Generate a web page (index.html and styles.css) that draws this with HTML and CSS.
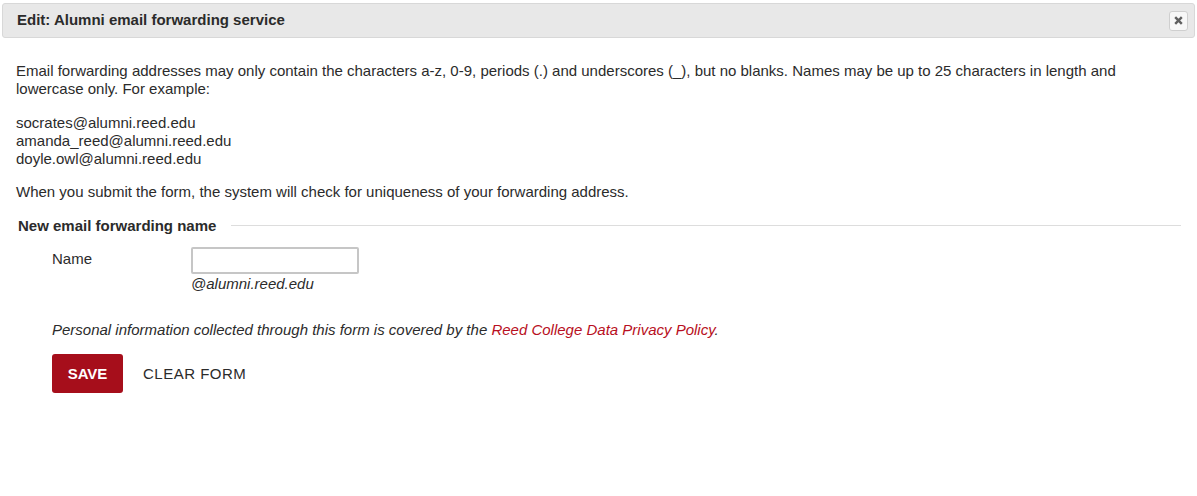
FILE: index.html
```html
<!DOCTYPE html>
<html lang="en">
<head>
<meta charset="utf-8">
<title>Edit: Alumni email forwarding service</title>
<link rel="stylesheet" href="styles.css">
</head>
<body>
<div class="dialog-header">
  <h2 class="dialog-title">Edit: Alumni email forwarding service</h2>
  <button class="close-btn" type="button" aria-label="Close">
    <svg width="9" height="9" viewBox="0 0 9 9"><path d="M1.2 1.2 L7.8 7.8 M7.8 1.2 L1.2 7.8" stroke="#5f5f5f" stroke-width="2.4" stroke-linecap="butt"/></svg>
  </button>
</div>
<div class="content">
  <p class="intro">Email forwarding addresses may only contain the characters a-z, 0-9, periods (.) and underscores (_), but no blanks. Names may be up to 25 characters in length and lowercase only. For example:</p>
  <p class="examples">socrates@alumni.reed.edu<br>amanda_reed@alumni.reed.edu<br>doyle.owl@alumni.reed.edu</p>
  <p class="note">When you submit the form, the system will check for uniqueness of your forwarding address.</p>
  <div class="section-head">
    <h3 class="section-title">New email forwarding name</h3>
    <span class="section-rule"></span>
  </div>
  <div class="field-row">
    <label class="field-label" for="name">Name</label>
    <div class="field-control">
      <input id="name" class="text-input" type="text" autofocus>
      <div class="field-suffix">@alumni.reed.edu</div>
    </div>
  </div>
  <p class="privacy">Personal information collected through this form is covered by the <a class="privacy-link" href="#">Reed College Data Privacy Policy</a>.</p>
  <div class="actions">
    <button class="btn-save" type="button">SAVE</button>
    <button class="btn-clear" type="button">CLEAR FORM</button>
  </div>
</div>
</body>
</html>
```

FILE: styles.css
```css
html, body {
  margin: 0;
  padding: 0;
  background: #ffffff;
}
body {
  font-family: "Liberation Sans", Arial, Helvetica, sans-serif;
  font-size: 15px;
  line-height: 18px;
  color: #2b2b2b;
}
.dialog-header {
  margin: 3px 2px 0 2px;
  box-sizing: border-box;
  height: 35px;
  background: #e8e8e8;
  border: 1px solid #d8d8d8;
  border-radius: 3px;
  display: flex;
  align-items: center;
  justify-content: space-between;
  padding: 0 6px 0 14px;
}
.dialog-title {
  margin: 0;
  font-size: 15px;
  font-weight: bold;
  color: #2b2b2b;
  line-height: 18px;
  margin-top: -2px;
}
.close-btn {
  width: 19px;
  height: 20px;
  padding: 0;
  margin: 0;
  border: 1px solid #cfcfcf;
  border-radius: 3px;
  background: #f7f7f7;
  display: flex;
  align-items: center;
  justify-content: center;
}
.content {
  padding: 24px 16px 0 16px;
}
.content p {
  margin: 0;
}
.intro {
  margin-bottom: 16px !important;
}
.examples {
  margin-bottom: 15px !important;
}
.note {
  margin-bottom: 16px !important;
}
.section-head {
  display: flex;
  align-items: center;
  padding-left: 2px;
  gap: 15px;
}
.section-title {
  margin: 0;
  font-size: 15px;
  font-weight: bold;
  line-height: 18px;
  color: #2b2b2b;
}
.section-rule {
  flex: 1;
  height: 1px;
  background: #dddddd;
  margin-top: -1px;
}
.field-row {
  display: grid;
  grid-template-columns: 139px auto;
  padding-left: 36px;
  margin-top: 12px;
}
.field-label {
  padding-top: 3px;
  color: #2b2b2b;
}
.field-control {
  display: flex;
  flex-direction: column;
}
.text-input {
  width: 168px;
  height: 27px;
  box-sizing: border-box;
  border: 2px solid #c6c6c6;
  border-radius: 2px;
  padding: 2px 4px;
  font-family: "Liberation Sans", Arial, sans-serif;
  font-size: 15px;
  background: #ffffff;
  outline: none;
  caret-color: #000;
}
.field-suffix {
  font-style: italic;
  margin-top: 1px;
}
.privacy {
  font-style: italic;
  padding-left: 36px;
  margin-top: 28px !important;
}
.privacy-link {
  color: #b80f22;
  text-decoration: none;
}
.actions {
  display: flex;
  align-items: center;
  padding-left: 36px;
  margin-top: 15px;
  gap: 20px;
}
.btn-save {
  width: 71px;
  height: 39px;
  border: none;
  border-radius: 3px;
  background: #a60e1b;
  color: #ffffff;
  font-family: "Liberation Sans", Arial, sans-serif;
  font-size: 15px;
  font-weight: bold;
  padding: 0;
}
.btn-clear {
  border: none;
  background: none;
  padding: 0;
  font-family: "Liberation Sans", Arial, sans-serif;
  font-size: 15px;
  color: #2b2b2b;
  letter-spacing: 0.5px;
}
```
